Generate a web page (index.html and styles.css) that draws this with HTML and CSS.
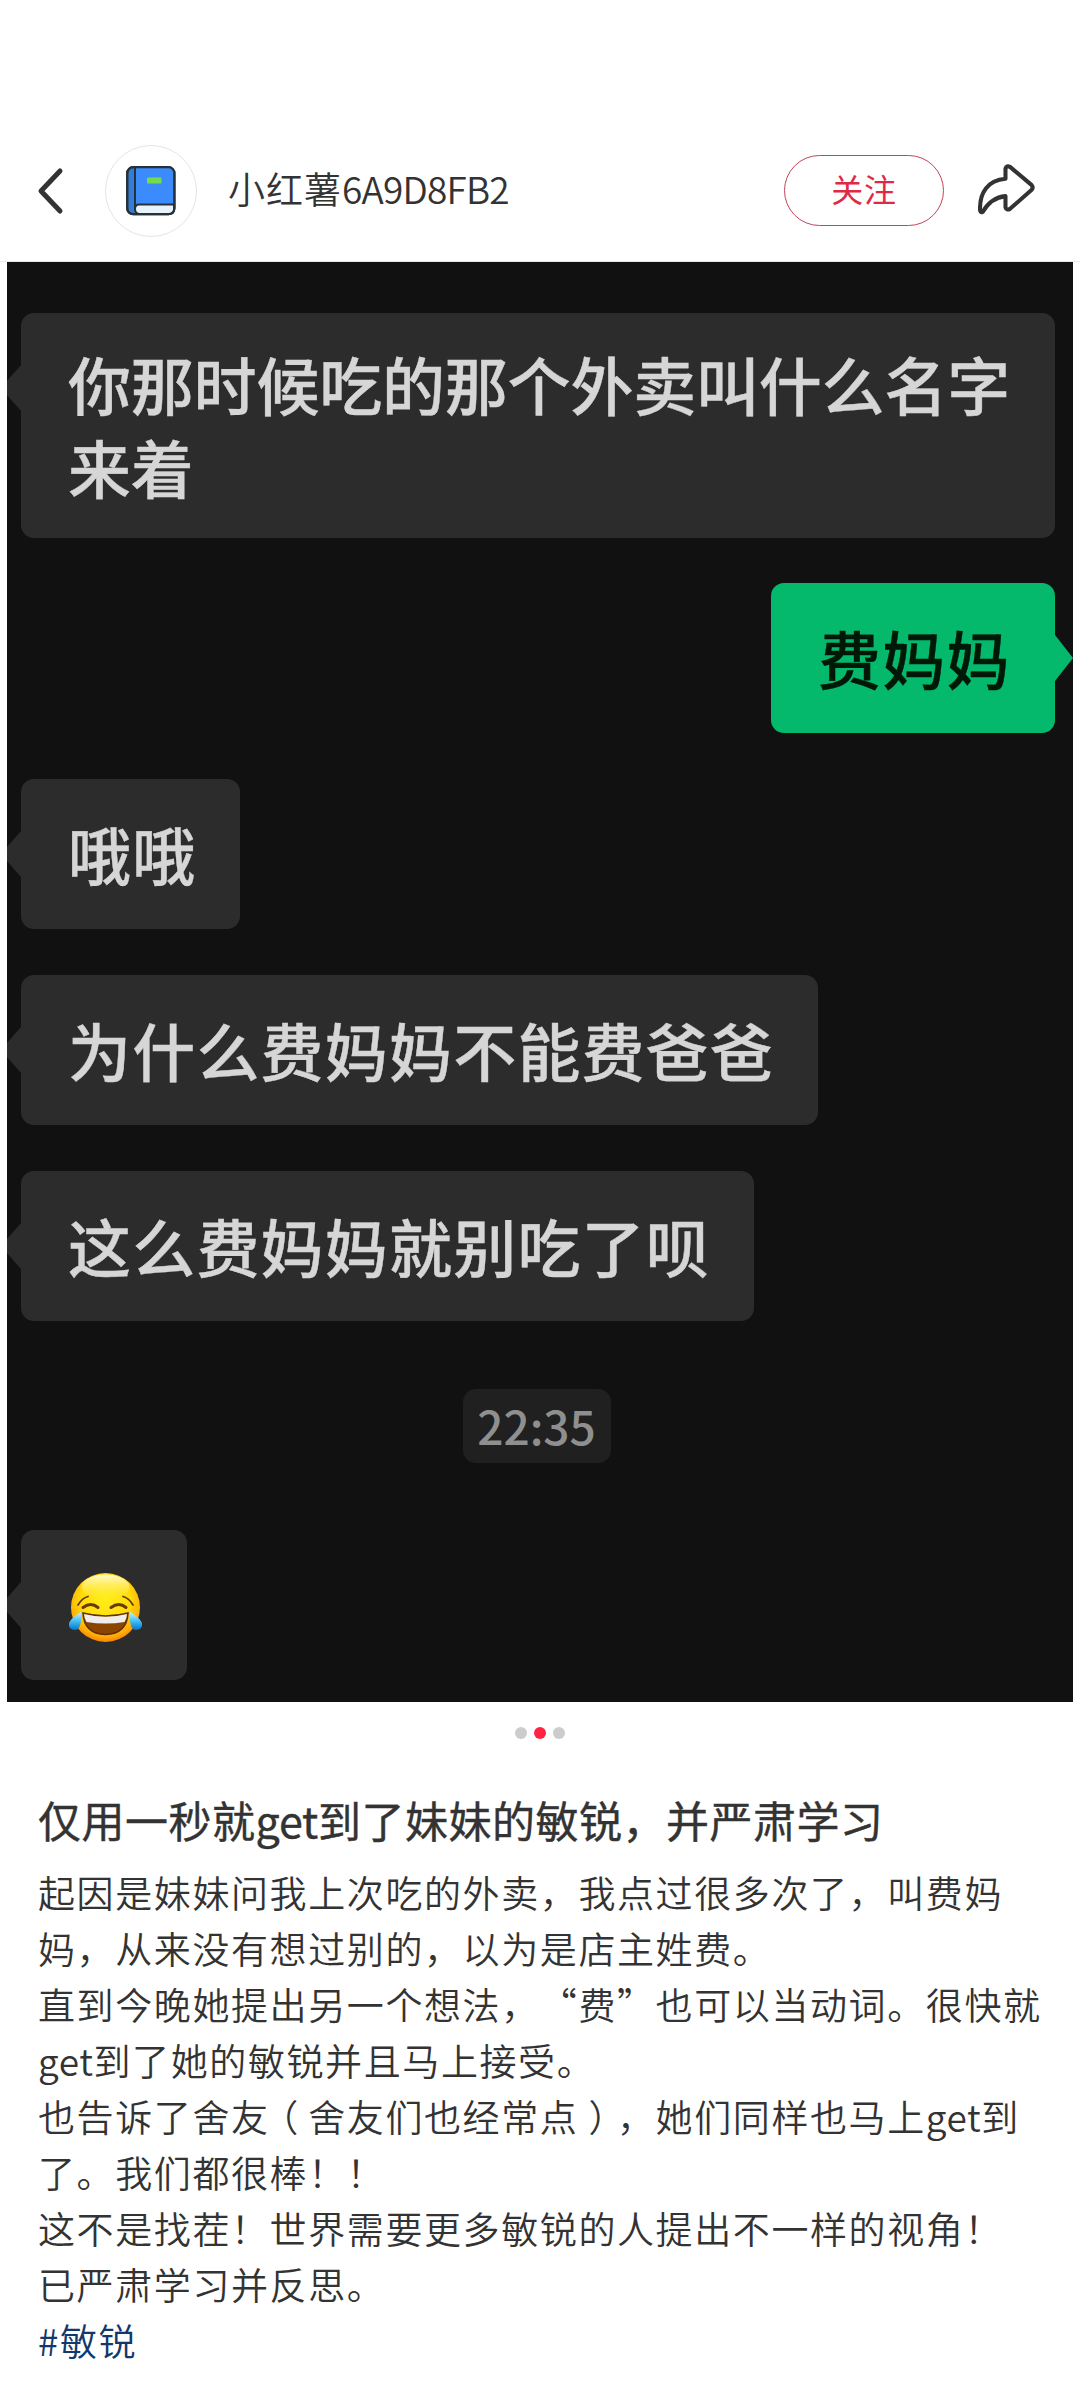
FILE: index.html
```html
<!DOCTYPE html>
<html lang="zh-CN">
<head>
<meta charset="utf-8">
<title>小红薯6A9D8FB2</title>
<link rel="stylesheet" href="styles.css">
</head>
<body>
<header class="header">
  <svg class="back" viewBox="0 0 28 48" fill="none" stroke="#333" stroke-width="5" stroke-linecap="round" stroke-linejoin="round"><path d="M23 4 4 24 23 44"/></svg>
  <div class="avatar">
    <svg width="50" height="50" viewBox="0 0 50 50">
      <rect x="1.2" y="1.2" width="47.2" height="47" rx="6" fill="#347cd8" stroke="#263238" stroke-width="2.2"/>
      <path d="M9 2h35q3.5 0 3.5 3.500V38H9z" fill="#3c8bfd"/>
      <path d="M48 38.500H13q-4 0-4 4.500t4 5h31q3.500 0 4-4z" fill="#e9f3fc" stroke="#263238" stroke-width="2"/>
      <path d="M9 1.500v43" stroke="#263238" stroke-width="2"/>
      <rect x="1.200" y="1.200" width="47.200" height="47" rx="6" fill="none" stroke="#263238" stroke-width="2.200"/>
      <rect x="21" y="11.500" width="14.500" height="6" rx="1" fill="#72dc4e"/>
    </svg>
  </div>
  <div class="name">小红薯<span class="code">6A9D8FB2</span></div>
  <button class="follow">关注</button>
  <svg class="share" viewBox="0 0 56 50" fill="none" stroke="#333" stroke-width="4" stroke-linecap="round" stroke-linejoin="round"><path d="M27 14.500V4.500Q28 1.200 31.500 2.800L52.500 20.500Q54.800 23 52.500 25.500L31.500 44Q28 45.800 27 42.500V31.500C17 32.500 10.500 37 4.800 46.800Q2.200 48.500 2 45C1.500 28 9.500 16 27 14.500Z"/></svg>
</header>

<main>
  <section class="chat">
    <div class="bubble long">你那时候吃的那个外卖叫什么名字<br>来着</div>
    <div class="bubble mine">费妈妈</div>
    <div class="bubble">哦哦</div>
    <div class="bubble">为什么费妈妈不能费爸爸</div>
    <div class="bubble">这么费妈妈就别吃了呗</div>
    <time class="time">22:35</time>
    <div class="bubble laugh">
      <svg width="76" height="72" viewBox="0 0 76 72">
        <defs>
          <radialGradient id="face" cx="50%" cy="38%" r="64%"><stop offset="0" stop-color="#ffee18"/><stop offset=".55" stop-color="#ffdc08"/><stop offset=".85" stop-color="#ffab0b"/><stop offset="1" stop-color="#f37900"/></radialGradient>
          <linearGradient id="shine" x1="0" y1="0" x2="0" y2="1"><stop offset="0" stop-color="#fffbd0"/><stop offset="1" stop-color="#fff04c" stop-opacity="0"/></linearGradient>
          <linearGradient id="tear" x1="0" y1="0" x2="0" y2="1"><stop offset="0" stop-color="#c9f3ff"/><stop offset=".5" stop-color="#45bff2"/><stop offset="1" stop-color="#0074ce"/></linearGradient>
        </defs>
        <circle cx="37.500" cy="35.500" r="34.500" fill="url(#face)"/>
        <ellipse cx="37.500" cy="15" rx="24" ry="12.500" fill="url(#shine)"/>
        <g fill="none" stroke="#6b3908" stroke-linecap="round">
          <path d="M10 33q4-7 10-8.500M65 33q-4-7-10-8.500" stroke-width="1.800"/>
          <path d="M15 35.500q8-6 15 0M43 35.500q8-6 15 0" stroke-width="3"/>
        </g>
        <path d="M15 41q22.500 6 45 0-1 21-22.500 21.500Q16 62 15 41z" fill="#8c4500" stroke="#632f03" stroke-width="1.500"/>
        <path d="M16 42q21.500 5.500 43 0 0 4-2.500 8-19 3-38 0Q16 46 16 42z" fill="#f0eeec"/>
        <path d="M13 40Q14 58 7 58 0 57.500 1 51 3 46 13 40zM62 40Q61 58 68 58 75 57.500 74 51 72 46 62 40z" fill="url(#tear)"/>
      </svg>
    </div>
  </section>
  <div class="dots"><i></i><i class="on"></i><i></i></div>

  <article class="post">
    <h1>仅用一秒就<span class="latin">get</span>到了妹妹的敏锐，并严肃学习</h1>
    <p>起因是妹妹问我上次吃的外卖，我点过很多次了，叫费妈<br>妈，从来没有想过别的，以为是店主姓费。</p>
    <p>直到今晚她提出另一个想法，“费”也可以当动词。很快就<br><span class="latin">get</span>到了她的敏锐并且马上接受。</p>
    <p>也告诉了舍友<span class="paren">（</span>舍友们也经常点<span class="paren">）</span>，她们同样也马上<span class="latin">get</span>到<br>了。我们都很棒！！</p>
    <p>这不是找茬！世界需要更多敏锐的人提出不一样的视角！</p>
    <p>已严肃学习并反思。</p>
    <p><a class="tag">#敏锐</a></p>
  </article>
</main>
</body>
</html>
```
FILE: styles.css
```css
* { box-sizing: border-box; margin: 0; padding: 0; }

body {
  width: 1080px;
  min-height: 2397px;
  background: #fff;
  color: #333;
  font-family: "Noto Sans CJK SC", sans-serif;
  font-weight: 350;
  text-spacing-trim: space-all;
}

.header {
  display: flex;
  align-items: center;
  height: 262px;
  padding: 120px 45px 0 37px;
  border-bottom: 1px solid #e4e8e6;
}

.back { width: 28px; height: 48px; }

.avatar {
  display: grid;
  place-items: center;
  width: 92px;
  height: 92px;
  margin-left: 40px;
  border: 1px solid #e5e5e5;
  border-radius: 50%;
}

.name {
  margin: 0 auto 6px 31px;
  font-size: 37px;
  line-height: 50px;
  letter-spacing: 1px;
  white-space: nowrap;
}

.code { letter-spacing: -0.8px; }

.follow {
  width: 160px;
  height: 71px;
  padding-bottom: 5px;
  border: 1px solid #c54458;
  border-radius: 36px;
  background: transparent;
  color: #df2a45;
  font: 400 32px/40px "Noto Sans CJK SC", sans-serif;
  letter-spacing: 0.7px;
}

.share { width: 57px; height: 51px; margin: 0 0 2px 34px; }

.chat {
  display: flex;
  flex-direction: column;
  align-items: flex-start;
  height: 1440px;
  margin: 0 7px;
  padding: 51px 18px 0 14px;
  overflow: hidden;
  background: #111;
}

.bubble {
  position: relative;
  display: flex;
  align-items: center;
  height: 150px;
  margin-bottom: 46px;
  padding: 0 44px 2px 47px;
  border-radius: 13px;
  background: #2c2c2c;
  color: #d6d6d6;
  font-size: 63px;
  font-weight: 500;
  line-height: 82.5px;
  letter-spacing: 1.2px;
  white-space: nowrap;
  -webkit-text-stroke: 0.4px currentColor;
}

.bubble::before {
  content: "";
  position: absolute;
  top: 52px;
  left: -20px;
  width: 20px;
  height: 46px;
  background: inherit;
  clip-path: polygon(100% 0, 0 50%, 100% 100%);
}

.long {
  display: block;
  width: 1034px;
  height: 225px;
  margin-bottom: 45px;
  padding-top: 29px;
  letter-spacing: -0.2px;
}

.mine {
  align-self: flex-end;
  width: 284px;
  background: #04b96c;
  color: #001808;
}

.mine::before {
  right: -18px;
  left: auto;
  width: 18px;
  clip-path: polygon(0 0, 100% 50%, 0 100%);
}

.time {
  align-self: center;
  width: 148px;
  height: 74px;
  margin: 22px 0 67px -3px;
  border-radius: 13px;
  background: #202020;
  color: #8f8f8f;
  font-size: 46px;
  font-weight: 500;
  line-height: 72px;
  text-align: center;
}

.laugh { width: 166px; margin-bottom: 0; padding-top: 6px; padding-bottom: 0; }
.laugh svg { flex: none; }

.dots {
  display: flex;
  justify-content: center;
  gap: 7px;
  padding-top: 25px;
}

.dots i { width: 12px; height: 12px; border-radius: 50%; background: #ccc; }
.dots .on { background: #ff2442; }

.post {
  padding: 50px 0 0 38px;
  font-size: 37px;
  line-height: 56px;
  letter-spacing: 1.6px;
  white-space: nowrap;
}

.post h1 {
  margin-bottom: 15px;
  font-size: 43px;
  font-weight: 400;
  line-height: 60px;
  letter-spacing: 0.5px;
  -webkit-text-stroke: 0.4px currentColor;
}

.latin { letter-spacing: 0.6px; }
h1 .latin { letter-spacing: -0.2px; }

/* half-width parentheses centred in a full-width cell */
.paren {
  display: inline-block;
  width: 38.6px;
  letter-spacing: 0;
  text-align: center;
  font-feature-settings: "halt";
}

.tag { color: #13386c; }
```
